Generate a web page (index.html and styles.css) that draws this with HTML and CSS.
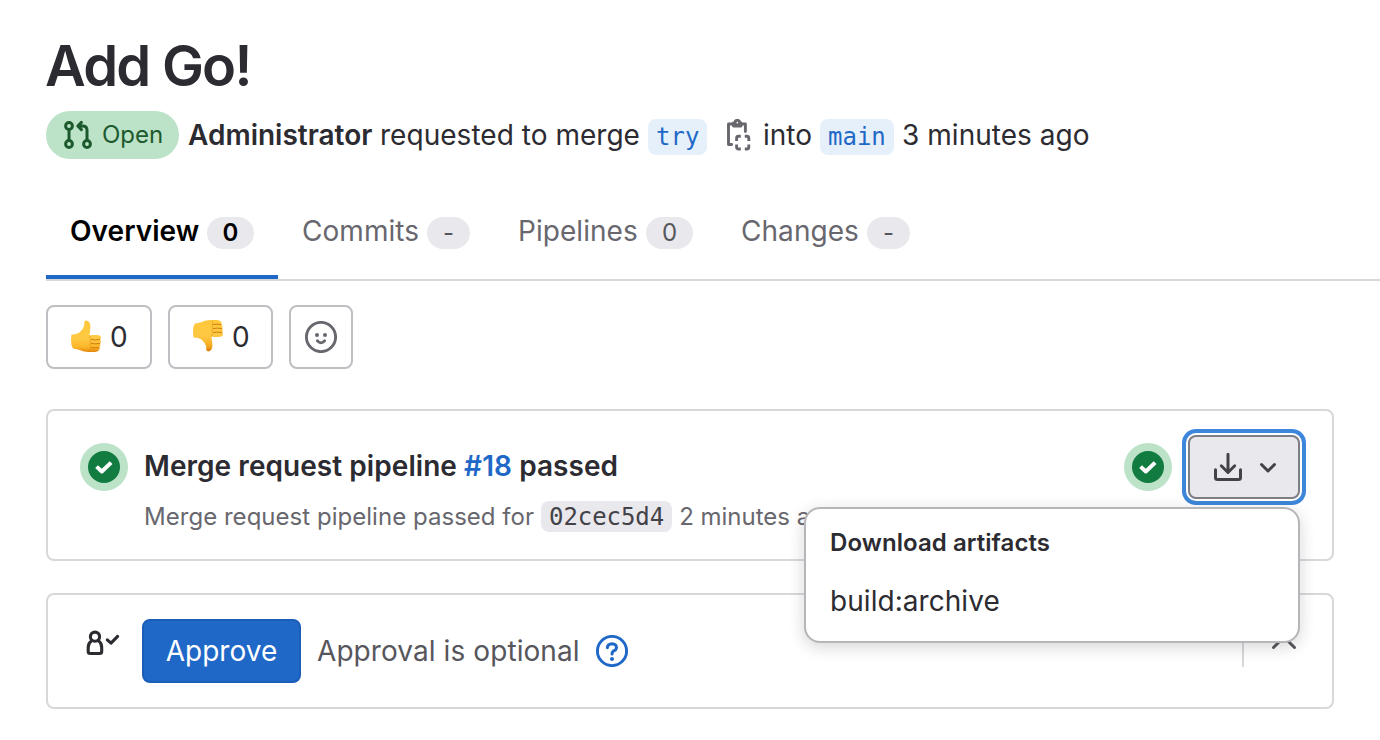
FILE: index.html
```html
<!DOCTYPE html>
<html lang="en">
<head>
<meta charset="utf-8">
<title>Add Go!</title>
<link rel="stylesheet" href="styles.css">
</head>
<body>
<svg class="defs" aria-hidden="true">
  <defs>
    <linearGradient id="skin" x1="0" y1="0" x2="0" y2="1">
      <stop offset="0" stop-color="#ffc83a"/><stop offset=".6" stop-color="#fec843"/><stop offset=".85" stop-color="#fcb426"/><stop offset="1" stop-color="#e2850c"/>
    </linearGradient>
    <linearGradient id="skin-down" x1="0" y1="1" x2="0" y2="0">
      <stop offset="0" stop-color="#ffc83a"/><stop offset=".5" stop-color="#fec843"/><stop offset=".8" stop-color="#f8ae24"/><stop offset="1" stop-color="#d97d0a"/>
    </linearGradient>
    <symbol id="status-success" viewBox="0 0 48 48">
      <circle cx="24" cy="24" r="24" fill="#bce2c8"/>
      <circle cx="24" cy="24" r="16" fill="#117b40"/>
      <path d="M16.600 23.600l5.200 4.900 9.300-8.900" fill="none" stroke="#fff" stroke-width="4" stroke-linejoin="round"/>
    </symbol>
    <symbol id="thumb-up" viewBox="0 0 32 34">
      <path d="M1.500 15.500Q6 15.800 9.500 13.500Q13.500 10 14.200 6.500L14.300 3Q15.300 .8 17.800 2Q20.200 3.400 20.400 7.500Q20.400 11.500 19.400 16L20.500 16.500Q22 15.700 25 16L29 16.300Q31.300 16.800 31 19Q30.800 20 30.300 20.400Q31.600 22.400 30.300 24.300Q30.900 26.600 29.500 28.200Q30.300 30.200 28.700 31.500Q27.500 32.800 25 33H18Q12.500 32.800 8.500 30.500L3 29.500Q1 27 1 22Q1 18 1.500 15.500Z"/>
      <path d="M21 20.400Q25.500 21.400 30 20.400M20.800 24.400Q25.500 25.400 30 24.400M20.800 28.500Q25 29.300 29.300 28.300" fill="none" stroke="#cf7d10" stroke-width="1"/>
      <path d="M20.500 16.500Q18.500 18.300 21 20.400Q19 22.200 20.800 24.400Q19.200 26.300 20.800 28.500Q19.600 30.500 21 32.500" fill="none" stroke="#e39a1c" stroke-width=".7"/>
    </symbol>
  </defs>
</svg>
<main class="page">
  <h1 class="title">Add Go!</h1>
  <div class="byline">
    <span class="state">
      <svg class="icon" viewBox="0 0 16 16"><g fill="none" stroke="currentColor" stroke-width="1.500" stroke-linecap="round" stroke-linejoin="round"><circle cx="3.500" cy="3.500" r="1.700"/><circle cx="3.500" cy="12.500" r="1.700"/><circle cx="12.500" cy="12.500" r="1.700"/><path d="M3.500 5.500v5M12.500 10.500V5.600Q12.500 3.500 10.400 3.500H8.300M9.700 1.700L7.900 3.500l1.800 1.800"/></g></svg>
      <span>Open</span>
    </span>
    <strong class="author">Administrator</strong>
    <span class="requested">requested to merge</span>
    <code class="branch">try</code>
    <svg class="icon copy" viewBox="0 0 32 32"><g fill="none" stroke="currentColor" stroke-width="2.900" stroke-linecap="round" stroke-linejoin="round"><path d="M9.500 5H5.500V25.500H8.600M19.500 5H22.400V12.500"/><circle cx="14.300" cy="3.600" r="2.300"/><path d="M10.500 4V7H18V4"/><path d="M13.600 22V19.200Q13.600 17.200 15.600 17.200H17.800M21.800 17.200H23.800Q25.800 17.200 25.800 19.200V22M25.800 25.600V28Q25.800 30 23.800 30H21.800M17.800 30H15.600Q13.600 30 13.600 28V25.600" stroke-linecap="butt"/></g></svg>
    <span>into</span>
    <code class="branch">main</code>
    <span class="when">3 minutes ago</span>
  </div>
  <nav class="tabs">
    <a class="tab active"><span>Overview</span><b class="count">0</b></a>
    <a class="tab"><span>Commits</span><b class="count dash">-</b></a>
    <a class="tab"><span>Pipelines</span><b class="count">0</b></a>
    <a class="tab"><span>Changes</span><b class="count dash">-</b></a>
  </nav>
  <div class="awards">
    <button class="award"><svg class="emoji" viewBox="0 0 32 34"><use href="#thumb-up" fill="url(#skin)"/></svg><span>0</span></button>
    <button class="award down"><svg class="emoji" viewBox="0 0 32 34"><use href="#thumb-up" fill="url(#skin-down)" transform="matrix(1 0 0 -1 0 34)"/></svg><span>0</span></button>
    <button class="award add"><svg class="icon" viewBox="0 0 32 32"><circle cx="16" cy="16" r="14.600" fill="none" stroke="currentColor" stroke-width="2.900"/><circle cx="12" cy="14" r="2" fill="currentColor"/><circle cx="20" cy="14" r="2" fill="currentColor"/><path d="M12.300 19.800q3.700 4 7.400 0" fill="none" stroke="currentColor" stroke-width="2.800" stroke-linecap="round"/></svg></button>
  </div>
  <section class="card pipeline">
    <svg class="status" viewBox="0 0 48 48"><use href="#status-success"/></svg>
    <div class="summary">
      <div class="headline">Merge request pipeline <a>#18</a> passed</div>
      <div class="detail"><span class="passed-for">Merge request pipeline passed for</span><code class="sha">02cec5d4</code><span>2 minutes ago</span></div>
    </div>
    <svg class="status" viewBox="0 0 48 48"><use href="#status-success"/></svg>
    <div class="dropdown">
      <button class="download">
        <svg class="icon" viewBox="0 0 32 32"><path d="M16 3.300V21M9.300 14.800L16 21.500l6.700-6.700M3.500 18.700V26.500Q3.500 28.500 5.500 28.500H26.500Q28.500 28.500 28.500 26.500V18.700" fill="none" stroke="currentColor" stroke-width="3" stroke-linecap="round" stroke-linejoin="round"/></svg>
        <svg class="icon" viewBox="0 0 32 32"><path d="M9.500 13.500l6.500 6.500 6.500-6.500" fill="none" stroke="currentColor" stroke-width="3" stroke-linecap="round" stroke-linejoin="round"/></svg>
      </button>
      <div class="menu">
        <div class="menu-title">Download artifacts</div>
        <div class="menu-item">build:archive</div>
      </div>
    </div>
  </section>
  <section class="card approval">
    <svg class="approver" viewBox="0 0 34 26"><g fill="none" stroke="currentColor" stroke-width="3.100" stroke-linecap="round" stroke-linejoin="round"><circle cx="9" cy="6.700" r="4.600"/><path d="M5.400 11Q2.200 13 2.200 17.500V21.500Q2.200 23.500 4.200 23.500H13.700Q15.700 23.500 15.700 21.500V17.500Q15.700 13 12.700 11"/><path d="M21.300 9.800l3.700 3.300 6.600-6.700"/></g></svg>
    <button class="approve">Approve</button>
    <span class="optional">Approval is optional</span>
    <svg class="icon help" viewBox="0 0 32 32"><circle cx="16" cy="16" r="14.600" fill="none" stroke="currentColor" stroke-width="2.900"/><path d="M11.400 12.700Q11.600 8.900 16 8.800Q20.400 9 20.400 12.400Q20.400 14.600 18.200 15.700Q16 16.800 16 19" fill="none" stroke="currentColor" stroke-width="3" stroke-linecap="round"/><circle cx="16" cy="24" r="2" fill="currentColor"/></svg>
    <div class="collapse"><svg class="icon" viewBox="0 0 32 32"><path d="M5.500 20.500L16 10l10.500 10.500" fill="none" stroke="currentColor" stroke-width="3" stroke-linecap="round"/></svg></div>
  </section>
</main>
</body>
</html>
```
FILE: styles.css
```css
* { box-sizing: border-box; }
body { margin: 0; background: #fff; color: #2c2b31; font: 28px/40px Inter, sans-serif; white-space: nowrap; overflow: hidden; }
.defs { position: absolute; width: 0; height: 0; }
.page { width: 1380px; height: 740px; padding: 30px 0 0 46px; }
.title { margin: 0 0 0 -1px; font-size: 56px; line-height: 72px; font-weight: 600; height: 81px; letter-spacing: -1.75px; }
.icon { width: 32px; height: 32px; flex: none; display: block; }
.byline { display: grid; grid-template-columns: 142px 192px 268px 59px 56px 57px 83px auto; align-items: center; height: 48px; }
.state { display: flex; align-items: center; gap: 8px; width: 133px; height: 48px; border-radius: 24px; background: #bce2c8; color: #1c5a2e; padding-left: 16px; font-size: 24px; }
.author { font-weight: 600; }
.requested { letter-spacing: .03px; }
.when { margin-left: -1px; letter-spacing: .04px; }
.branch { display: block; width: max-content; height: 36px; line-height: 36px; padding: 0 8px; border-radius: 8px; background: #e6f0fb; color: #1f68c7; font-family: "DejaVu Sans Mono", monospace; font-size: 24px; margin-top: 3px; }
.copy { color: #68676e; margin-left: 16px; }
.tabs { display: grid; grid-template-columns: 232px 216px 223px 217px; height: 90px; margin-top: 32px; margin-bottom: 24px; border-bottom: 2px solid #d8d8da; }
.tab { display: flex; justify-content: space-between; height: 88px; padding: 20px 24px 28px; color: #68676e; letter-spacing: .05px; }
.active { color: #000; font-weight: 600; border-bottom: 4px solid #1f68c7; padding-bottom: 24px; }
.count { width: 47px; height: 32px; margin-top: 6px; border-radius: 16px; background: #e9e8ed; font: inherit; font-size: 24px; line-height: 31px; text-align: center; color: #57565c; }
.dash { width: 43px; }
.active .count { color: #000; }
.awards { display: flex; gap: 16px; height: 64px; }
button { font: inherit; color: inherit; margin: 0; padding: 0; background: none; }
.award { display: flex; align-items: center; width: 106px; height: 64px; border: 2px solid #bfbfc3; border-radius: 8px; padding-left: 22px; gap: 8px; }
.down { width: 105px; }
.add { width: 64px; padding-left: 14px; color: #68676e; }
.emoji { width: 32px; height: 34px; flex: none; margin-top: -2px; }
.card { border: 2px solid #d8d8da; border-radius: 8px; width: 1288px; display: flex; }
.pipeline { height: 152px; margin-top: 40px; padding: 32px; }
.status { width: 48px; height: 48px; flex: none; }
.summary { width: 980px; padding-left: 16px; margin-right: 16px; flex: none; }
.headline { font-weight: 600; height: 46px; line-height: 46px; letter-spacing: .055px; }
.headline a { color: #1f68c7; }
.detail { display: flex; align-items: center; font-size: 24px; color: #68676e; margin-top: 12px; height: 32px; }
.passed-for { width: 397px; letter-spacing: .03px; }
.sha { height: 31px; line-height: 33px; padding: 0 8px; border-radius: 8px; background: #e9e8ed; color: #434248; font-family: "DejaVu Sans Mono", monospace; font-size: 24px; letter-spacing: -.06px; margin: -1px 7px 0 0; }
.dropdown { position: relative; margin: -8px 0 0 16px; }
.download { display: flex; align-items: center; gap: 8px; width: 112px; height: 64px; padding-left: 22px; border: 2px solid #7f7e84; border-radius: 8px; background: #e9e8ed; color: #434248; box-shadow: 0 0 0 2px #fff, 0 0 0 6px #3d86d9; }
.menu { position: absolute; right: 0; top: 72px; width: 496px; height: 136px; border: 2px solid #b5b5ba; border-radius: 16px; background: #fff; padding: 14px 24px; box-shadow: 0 4px 16px rgba(31,30,36,.18); z-index: 2; }
.menu-title { font-size: 24px; font-weight: 600; letter-spacing: .06px; }
.menu-item { margin-top: 18px; letter-spacing: .05px; }
.approval { height: 116px; margin-top: 32px; padding: 24px 0 0 38px; align-items: flex-start; }
.approver { width: 34px; height: 26px; margin-top: 11px; }
.approve { width: 159px; height: 64px; border-radius: 8px; background: #1f68c7; border: 2px solid #1b5eb8; color: #fff; margin-left: 22px; }
.optional { width: 279px; margin: 12px 0 0 16px; color: #57565c; letter-spacing: .08px; }
.help { color: #1f68c7; margin-top: 16px; }
.collapse { margin: 8px 0 0 auto; width: 90px; height: 40px; border-left: 2px solid #d8d8da; padding-left: 24px; color: #57565c; }
```
